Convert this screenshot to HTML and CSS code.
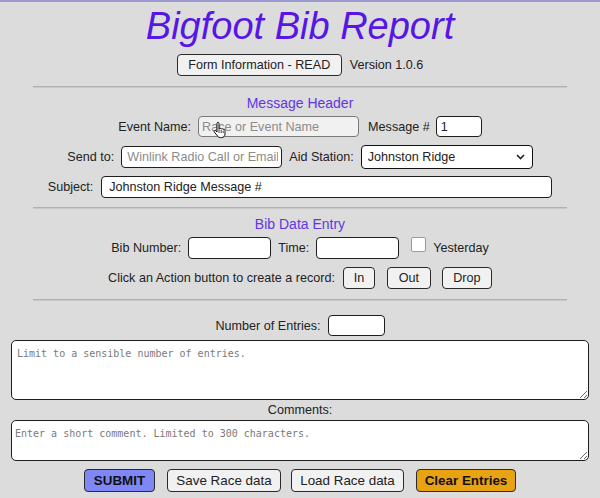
FILE: index.html
```html
<!DOCTYPE html>
<html>
<head>
<meta charset="utf-8">
<title>Bigfoot Bib Report</title>
<link rel="stylesheet" href="styles.css">
</head>
<body>
<h1 class="title">Bigfoot Bib Report</h1>
<div class="row info-row">
  <button class="btn btn-info">Form Information - READ</button>
  <span>Version 1.0.6</span>
</div>
<hr class="rule">
<div class="section-title">Message Header</div>
<div class="row row-1">
  <label>Event Name:</label>
  <span class="hover-wrap">
    <input class="field field-event hovered" type="text" placeholder="Race or Event Name">
    <svg class="cursor" width="14" height="18" viewBox="0 0 14 18"><path d="M4 1.5c0-.8.5-1.2 1-1.2s1 .4 1 1.2V7l.2-.1c.3-.5.7-.6 1-.6.5 0 .9.3 1 .8.3-.4.6-.5 1-.5.5 0 .9.4 1 .9.2-.3.5-.4.8-.4.6 0 1 .5 1 1.1v3.8c0 2-1.4 3.6-3.4 3.6H7.4c-1.2 0-2-.5-2.700-1.4L1.3 10c-.4-.5-.3-1.1.2-1.4.4-.3 1-.2 1.4.2L4 10V1.5z" fill="#fff" stroke="#111" stroke-width="1"/><path d="M6 7v4M8.2 8v3M10.2 8.6v2.4" stroke="#111" stroke-width=".8" fill="none"/></svg>
  </span>
  <label class="msg-label">Message #</label>
  <input class="field field-msg" type="text" value="1">
</div>
<div class="row row-2">
  <label>Send to:</label>
  <input class="field field-send" type="text" placeholder="Winlink Radio Call or Email">
  <label>Aid Station:</label>
  <span class="select-wrap">
    <select class="field field-select">
      <option>Johnston Ridge</option>
    </select>
    <svg class="chev" width="9" height="6" viewBox="0 0 9 6"><path d="M1 1l3.5 3.5L8 1" stroke="#222" stroke-width="1.6" fill="none"/></svg>
  </span>
</div>
<div class="row row-3">
  <label>Subject:</label>
  <input class="field field-subject" type="text" value="Johnston Ridge Message #">
</div>
<hr class="rule rule-2">
<div class="section-title">Bib Data Entry</div>
<div class="row row-bib">
  <label>Bib Number:</label>
  <input class="field field-bib" type="text">
  <label>Time:</label>
  <input class="field field-bib" type="text">
  <input class="check" type="checkbox">
  <label>Yesterday</label>
</div>
<div class="row row-action">
  <label class="action-label">Click an Action button to create a record:</label>
  <button class="btn btn-act btn-in">In</button>
  <button class="btn btn-act btn-out">Out</button>
  <button class="btn btn-act btn-drop">Drop</button>
</div>
<hr class="rule rule-3">
<div class="row row-count">
  <label>Number of Entries:</label>
  <input class="field field-count" type="text">
</div>
<textarea class="area area-entries" placeholder="Limit to a sensible number of entries."></textarea>
<div class="comments-label">Comments:</div>
<textarea class="area area-comments" placeholder="Enter a short comment. Limited to 300 characters."></textarea>
<div class="row row-buttons">
  <button class="btn btn-big btn-submit">SUBMIT</button>
  <button class="btn btn-big btn-save">Save Race data</button>
  <button class="btn btn-big btn-load">Load Race data</button>
  <button class="btn btn-big btn-clear">Clear Entries</button>
</div>
</body>
</html>
```

FILE: styles.css
```css
html, body {
  margin: 0;
  padding: 0;
}
body {
  background: #dcdcdc;
  border-top: 2px solid #9c9ad0;
  font-family: "Liberation Sans", Arial, sans-serif;
  font-size: 12.6px;
  color: #222;
  width: 600px;
  height: 496px;
  overflow: hidden;
}
.title {
  margin: 2px 0 0;
  font-size: 38px;
  line-height: 44px;
  font-weight: normal;
  font-style: italic;
  text-align: center;
  color: #5716e4;
}
.row {
  display: flex;
  justify-content: center;
  align-items: center;
  gap: 7px;
}
.info-row {
  margin-top: 6px;
  gap: 8px;
}
.btn {
  font-family: "Liberation Sans", Arial, sans-serif;
  font-size: 12.6px;
  color: #222;
  background: #f1f1f1;
  border: 1px solid #2a2a2a;
  border-radius: 4px;
  height: 22px;
  padding: 0;
  margin: 0;
  white-space: nowrap;
  box-sizing: border-box;
}
.btn-info {
  width: 165px;
}
.rule {
  margin: 10px 33px 0;
  height: 0;
  border: 0;
  border-top: 1px solid #b0b0b0;
  border-bottom: 1px solid #c8c8c8;
}
.rule-2 { margin-top: 9px; }
.rule-3 { margin-top: 10px; }
.section-title {
  margin-top: 7px;
  font-size: 14px;
  line-height: 17px;
  text-align: center;
  color: #6236e2;
}
.field {
  font-family: "Liberation Sans", Arial, sans-serif;
  font-size: 12.6px;
  color: #222;
  background: #fff;
  border: 1px solid #1e1e1e;
  border-radius: 4px;
  height: 22px;
  padding: 0 6px;
  margin: 0;
  box-sizing: border-box;
}
.field::placeholder {
  color: #8c8c8c;
}
.row-1 { margin-top: 4px; }
.row-1 .field { height: 21px; }
.hover-wrap {
  position: relative;
  display: inline-flex;
}
.field-event {
  width: 161px;
  padding-left: 3px;
}
.hovered {
  background: #f1f1f1;
  border-color: #7a7a7a;
}
.cursor {
  position: absolute;
  left: 15px;
  top: 6px;
}
.msg-label { margin-left: 2px; }
.field-msg {
  width: 46px;
  padding-left: 4px;
  margin-left: -1px;
}
.row-2 { margin-top: 8px; }
.field-send {
  width: 161px;
  padding: 0 3px 0 5px;
}
.select-wrap {
  position: relative;
  display: inline-flex;
}
.field-select {
  width: 172px;
  height: 24px;
  padding: 0 22px 0 6px;
  appearance: none;
  -webkit-appearance: none;
  border-color: #111;
}
.chev {
  position: absolute;
  right: 8px;
  top: 9px;
  pointer-events: none;
}
.row-3 { margin-top: 7px; gap: 8px; }
.field-subject {
  width: 451px;
  padding-left: 7px;
}
.row-bib { margin-top: 4px; align-items: flex-start; }
.row-bib label { line-height: 22px; }
.field-bib { width: 83px; }
.check {
  appearance: none;
  -webkit-appearance: none;
  width: 15px;
  height: 15px;
  margin: 0 0 0 5px;
  background: #fff;
  border: 1px solid #9a9a9a;
  border-radius: 2px;
}
.row-action { margin-top: 8px; gap: 8px; }
.btn-in { width: 32px; }
.btn-out { width: 44px; margin-left: 4px; }
.btn-drop { width: 50px; margin-left: 3px; }
.row-count { margin-top: 14px; }
.field-count { width: 57px; height: 21px; }
.area {
  display: block;
  box-sizing: border-box;
  width: 578px;
  margin: 4px 11px 0;
  padding: 7px 5px 4px;
  font-family: "DejaVu Sans Mono", "Liberation Mono", monospace;
  font-size: 10px;
  background: #fff;
  border: 1px solid #1e1e1e;
  border-radius: 5px;
  color: #222;
}
.area::placeholder {
  color: #7a7a7a;
}
.area-entries { height: 60px; }
.comments-label {
  margin-top: 2px;
  text-align: center;
  line-height: 17px;
}
.area-comments {
  height: 41px;
  margin-top: 1px;
  padding-left: 3px;
}
.row-buttons {
  margin-top: 8px;
  gap: 12px;
}
.btn-big {
  font-size: 13.4px;
  height: 23px;
}
.btn-submit {
  width: 71px;
  background: #7f86f6;
  font-weight: bold;
  color: #111;
}
.btn-save { width: 114px; }
.btn-load { width: 113px; margin-left: -2px; }
.btn-clear {
  width: 100px;
  background: #e9a212;
  font-weight: bold;
  color: #111;
}
```
